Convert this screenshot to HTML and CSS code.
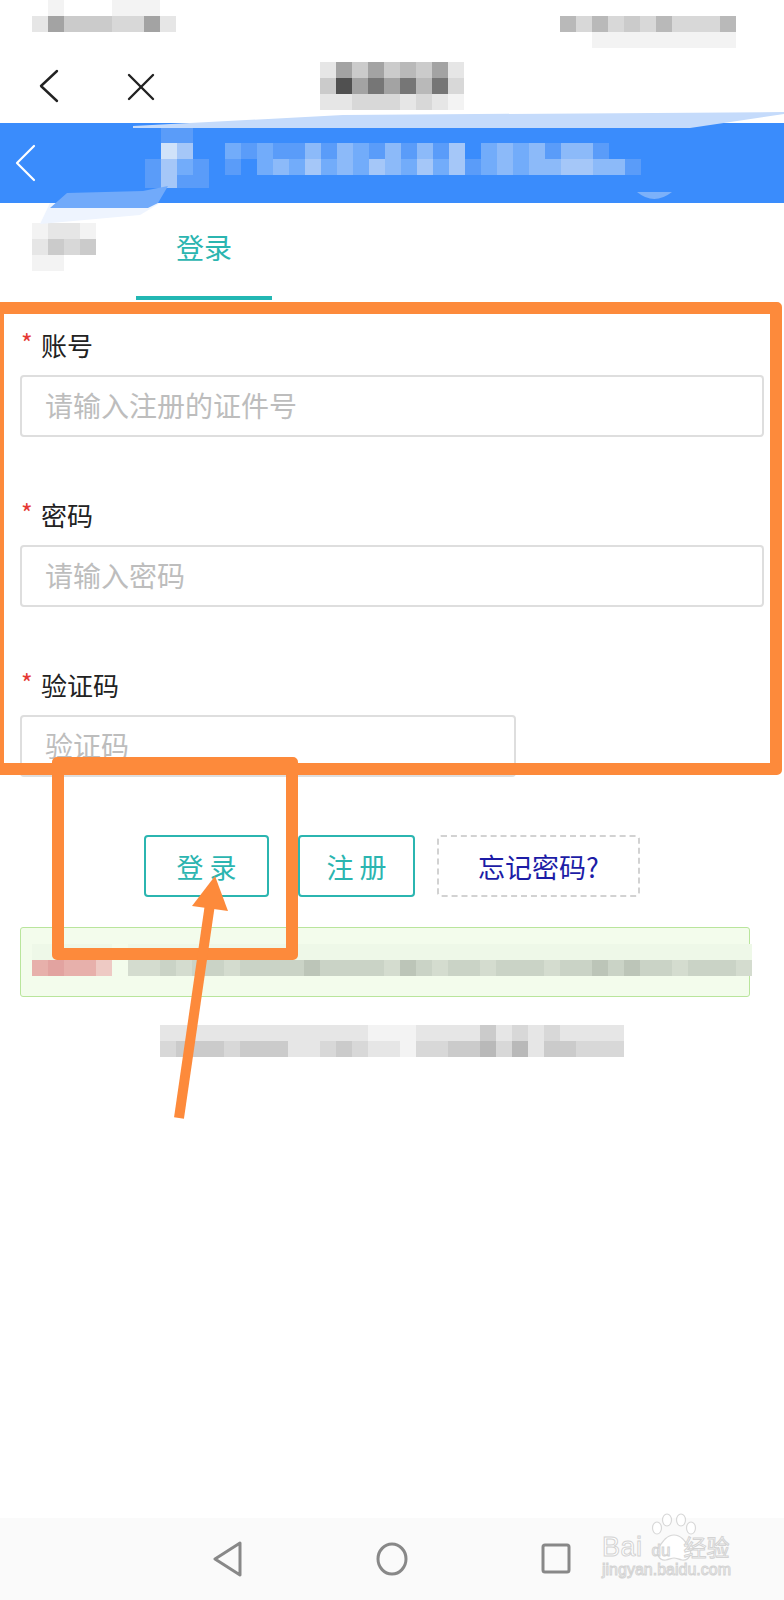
FILE: index.html
```html
<!DOCTYPE html>
<html lang="zh-CN">
<head>
    <meta charset="UTF-8">
    <meta name="viewport" content="width=device-width, initial-scale=1.0">
    <title>登录</title>
    <link rel="stylesheet" href="styles.css">
</head>
<body>
    <div class="phone">
        <!-- barra de status (borrada) -->
        <div class="status">
            <div class="mosaic">
                <div class="row"><i></i><i class="g0"></i><i></i><i></i><i></i><i class="g0"></i><i class="g0"></i><i class="g0"></i><i></i></div>
                <div class="row"><i class="g1"></i><i class="g5"></i><i class="g3"></i><i class="g3"></i><i class="g3"></i><i class="g2"></i><i class="g2"></i><i class="g5"></i><i class="g1"></i></div>
            </div>
            <div class="mosaic status-right">
                <div class="row"><i class="g4"></i><i class="g2"></i><i class="g4"></i><i class="g2"></i><i class="g3"></i><i class="g2"></i><i class="g4"></i><i class="g2"></i><i class="g2"></i><i class="g2"></i><i class="g4"></i></div>
                <div class="row"><i></i><i></i><i class="g0"></i><i class="g0"></i><i class="g0"></i><i class="g0"></i><i class="g0"></i><i class="g0"></i><i class="g0"></i><i class="g0"></i><i class="g0"></i></div>
            </div>
        </div>

        <div class="topnav">
            <svg class="nav-back" width="24" height="34" viewBox="0 0 24 34"><polyline points="20,2 4,17 20,32" /></svg>
            <svg class="nav-close" width="30" height="30" viewBox="0 0 30 30"><line x1="4" y1="4" x2="28" y2="28" /><line x1="28" y1="4" x2="4" y2="28" /></svg>
            <div class="mosaic nav-title">
                <div class="row"><i class="g1"></i><i class="g5"></i><i class="g3"></i><i class="g5"></i><i class="g3"></i><i class="g4"></i><i class="g3"></i><i class="g5"></i><i class="g1"></i></div>
                <div class="row"><i class="g3"></i><i class="g7"></i><i class="g5"></i><i class="g6"></i><i class="g5"></i><i class="g6"></i><i class="g4"></i><i class="g6"></i><i class="g2"></i></div>
                <div class="row"><i class="g1"></i><i class="g1"></i><i class="g2"></i><i class="g2"></i><i class="g2"></i><i class="g1"></i><i class="g2"></i><i class="g1"></i><i class="g0"></i></div>
            </div>
        </div>

        <div class="appbar">
            <svg class="bar-back" width="22" height="38" viewBox="0 0 22 38"><polyline points="19,2 2,19 19,36" /></svg>
            <div class="mosaic bar-title">
                <div class="row"><i></i><i class="b1"></i><i class="b1"></i></div>
                <div class="row"><i></i><i class="b5"></i><i class="b4"></i><i></i><i></i><i class="b2"></i><i class="b1"></i><i class="b2"></i><i class="b1"></i><i class="b1"></i><i class="b3"></i><i class="b1"></i><i class="b3"></i><i class="b2"></i><i class="b1"></i><i class="b3"></i><i class="b1"></i><i class="b3"></i><i class="b1"></i><i class="b4"></i><i></i><i class="b2"></i><i class="b3"></i><i class="b2"></i><i class="b3"></i><i class="b1"></i><i class="b3"></i><i class="b3"></i><i class="b1"></i><i></i><i></i></div>
                <div class="row"><i class="b1"></i><i class="b4"></i><i class="b2"></i><i class="b1"></i><i></i><i class="b1"></i><i></i><i class="b2"></i><i class="b3"></i><i class="b2"></i><i class="b4"></i><i class="b2"></i><i class="b3"></i><i class="b2"></i><i class="b4"></i><i class="b3"></i><i class="b2"></i><i class="b4"></i><i class="b2"></i><i class="b4"></i><i class="b1"></i><i class="b2"></i><i class="b3"></i><i class="b2"></i><i class="b3"></i><i class="b3"></i><i class="b4"></i><i class="b4"></i><i class="b3"></i><i class="b3"></i><i class="b1"></i></div>
                <div class="row short"><i class="b1"></i><i class="b4"></i><i class="b1"></i><i class="b1"></i></div>
            </div>
        </div>

        <div class="tabs">
            <div class="tab">
                <div class="mosaic tab-blur">
                    <div class="row"><i class="g0"></i><i class="g1"></i><i class="g1"></i><i class="g0"></i></div>
                    <div class="row"><i class="g1"></i><i class="g3"></i><i class="g2"></i><i class="g3"></i></div>
                    <div class="row"><i class="g0"></i><i class="g0"></i><i></i><i></i></div>
                </div>
            </div>
            <div class="tab active">登录</div>
        </div>

        <form class="login-form">
            <div class="form-item">
                <label for="account"><span class="req">*</span>账号</label>
                <input type="text" id="account" placeholder="请输入注册的证件号">
            </div>
            <div class="form-item">
                <label for="password"><span class="req">*</span>密码</label>
                <input type="password" id="password" placeholder="请输入密码">
            </div>
            <div class="form-item">
                <label for="code"><span class="req">*</span>验证码</label>
                <input type="text" id="code" class="code-input" placeholder="验证码">
            </div>

            <div class="actions">
                <button type="button" class="btn btn-login">登 录</button>
                <button type="button" class="btn btn-register">注 册</button>
                <button type="button" class="btn btn-forget">忘记密码?</button>
            </div>
        </form>

        <div class="notice">
            <div class="mosaic">
                <div class="row"><i class="n0"></i><i class="n0"></i><i class="n0"></i><i class="n0"></i><i class="n0"></i><i></i><i class="n0"></i><i class="n0"></i><i class="n0"></i><i class="n0"></i><i class="n0"></i><i class="n0"></i><i class="n0"></i><i class="n0"></i><i class="n0"></i><i class="n0"></i><i class="n0"></i><i class="n0"></i><i class="n0"></i><i class="n0"></i><i class="n0"></i><i class="n0"></i><i class="n0"></i><i class="n0"></i><i class="n0"></i><i class="n0"></i><i class="n0"></i><i class="n0"></i><i class="n0"></i><i class="n0"></i><i class="n0"></i><i class="n0"></i><i class="n0"></i><i class="n0"></i><i class="n0"></i><i class="n0"></i><i class="n0"></i><i class="n0"></i><i class="n0"></i><i class="n0"></i><i class="n0"></i><i class="n0"></i><i class="n0"></i><i class="n0"></i><i class="n0"></i></div>
                <div class="row"><i class="r1"></i><i class="r2"></i><i class="r1"></i><i class="r1"></i><i class="r0"></i><i></i><i class="n1"></i><i class="n1"></i><i class="n2"></i><i class="n1"></i><i class="n2"></i><i class="n2"></i><i class="n1"></i><i class="n2"></i><i class="n2"></i><i class="n2"></i><i class="n2"></i><i class="n3"></i><i class="n2"></i><i class="n2"></i><i class="n2"></i><i class="n2"></i><i class="n1"></i><i class="n3"></i><i class="n2"></i><i class="n1"></i><i class="n2"></i><i class="n2"></i><i class="n1"></i><i class="n2"></i><i class="n2"></i><i class="n2"></i><i class="n1"></i><i class="n2"></i><i class="n2"></i><i class="n3"></i><i class="n2"></i><i class="n3"></i><i class="n2"></i><i class="n2"></i><i class="n1"></i><i class="n2"></i><i class="n2"></i><i class="n2"></i><i class="n1"></i></div>
            </div>
        </div>

        <div class="mosaic footer-text">
            <div class="row"><i class="g1"></i><i class="g1"></i><i class="g1"></i><i class="g1"></i><i class="g1"></i><i class="g1"></i><i class="g1"></i><i class="g1"></i><i class="g1"></i><i class="g1"></i><i class="g1"></i><i class="g1"></i><i class="g1"></i><i class="g0"></i><i class="g0"></i><i class="g0"></i><i class="g1"></i><i class="g1"></i><i class="g1"></i><i class="g1"></i><i class="g3"></i><i class="g1"></i><i class="g2"></i><i class="g1"></i><i class="g2"></i><i class="g1"></i><i class="g1"></i><i class="g1"></i><i class="g1"></i></div>
            <div class="row"><i class="g2"></i><i class="g3"></i><i class="g3"></i><i class="g3"></i><i class="g2"></i><i class="g3"></i><i class="g3"></i><i class="g3"></i><i class="g1"></i><i class="g1"></i><i class="g2"></i><i class="g3"></i><i class="g2"></i><i class="g1"></i><i class="g1"></i><i class="g0"></i><i class="g2"></i><i class="g2"></i><i class="g3"></i><i class="g3"></i><i class="g4"></i><i class="g2"></i><i class="g4"></i><i class="g1"></i><i class="g3"></i><i class="g3"></i><i class="g2"></i><i class="g2"></i><i class="g2"></i></div>
        </div>

        <div class="navbar">
            <svg width="32" height="36" viewBox="0 0 32 36"><polygon points="28,2 3,18 28,34" /></svg>
            <svg width="32" height="36" viewBox="0 0 32 36"><ellipse cx="16" cy="18" rx="14" ry="15" /></svg>
            <svg width="32" height="36" viewBox="0 0 32 36"><rect x="3" y="4" width="26" height="27" rx="2" /></svg>
        </div>

        <!-- marca d'água -->
        <div class="watermark">
            <svg class="paw" width="46" height="50" viewBox="0 0 46 50">
                <ellipse cx="6" cy="15" rx="4.5" ry="6" />
                <ellipse cx="16" cy="7" rx="4.5" ry="6" />
                <ellipse cx="30" cy="7" rx="4.5" ry="6" />
                <ellipse cx="40" cy="15" rx="4.5" ry="6" />
                <path d="M23 22 C30 22 34 28 38 34 C42 40 38 48 31 47 C27 46 25 45 23 45 C21 45 19 46 15 47 C8 48 4 40 8 34 C12 28 16 22 23 22 Z" />
            </svg>
            <div class="wm-line"><span class="wm-bai">Bai</span><span class="wm-du">du</span><span class="wm-cn">经验</span></div>
            <div class="wm-url">jingyan.baidu.com</div>
        </div>

        <!-- borrões sobre o cabeçalho -->
        <svg class="smear" width="784" height="130" viewBox="0 0 784 130">
            <polygon class="smear-top" points="133,26 343,15 784,12 784,14 690,28 133,28" />
            <polygon class="smear-under" points="50,103 160,103 140,115 40,124" />
            <polygon class="smear-bar" points="50,108 67,93 143,91 168,86 158,103 148,108" />
            <path class="smear-bump" d="M637 92 Q654 106 672 92 Z" />
        </svg>

        <!-- anotações -->
        <div class="mark mark-form"></div>
        <div class="mark mark-button"></div>
        <svg class="arrow" width="70" height="255" viewBox="0 0 70 255">
            <line x1="40" y1="34" x2="9" y2="248" />
            <polygon points="45,6 22,36 58,41" />
        </svg>
    </div>
</body>
</html>
```

FILE: styles.css
```css
body {
    margin: 0;
    font-family: "Noto Sans CJK SC", "Noto Sans", sans-serif;
    background: #fff;
    color: #222;
}
.phone {
    position: relative;
    width: 784px;
    height: 1600px;
    display: flex;
    flex-direction: column;
    overflow: hidden;
}

/* mosaico */
.mosaic {
    display: flex;
    flex-direction: column;
}
.mosaic .row {
    display: flex;
}
.mosaic i {
    width: 16px;
    height: 16px;
    flex: none;
}
.g0 { background: #f3f3f3; }
.g1 { background: #e6e6e6; }
.g2 { background: #d8d8d8; }
.g3 { background: #cbcbcb; }
.g4 { background: #b9b9b9; }
.g5 { background: #a3a3a3; }
.g6 { background: #767676; }
.g7 { background: #505050; }
.b1 { background: #5a9cf9; }
.b2 { background: #72acfa; }
.b3 { background: #8cbaf9; }
.b4 { background: #a5c7f8; }
.b5 { background: #d0e2f9; }
.n0 { background: #eef8e8; }
.n1 { background: #d4dccf; }
.n2 { background: #cad3c6; }
.n3 { background: #bcc5b8; }
.r0 { background: #eecac4; }
.r1 { background: #e7b0ab; }
.r2 { background: #e2a3a0; }

/* topo */
.status {
    height: 48px;
    display: flex;
    justify-content: space-between;
    padding: 0 48px 0 32px;
}
.status-right {
    margin-top: 16px;
}
.topnav {
    height: 75px;
    display: flex;
    align-items: center;
}
.topnav svg {
    fill: none;
    stroke: #222;
    stroke-width: 2.4;
    stroke-linecap: round;
    stroke-linejoin: round;
}
.nav-back {
    margin-left: 37px;
}
.nav-close {
    margin-left: 64px;
}
.nav-title {
    margin-left: 165px;
}
.appbar {
    height: 80px;
    background: #3a8cfc;
    display: flex;
    align-items: center;
}
.bar-back {
    margin-left: 15px;
    fill: none;
    stroke: #fff;
    stroke-width: 2.2;
    stroke-linecap: round;
    stroke-linejoin: round;
}
.bar-title {
    align-self: flex-start;
    margin-top: 4px;
    margin-left: 108px;
}
.bar-title .short i {
    height: 13px;
}

/* abas */
.tabs {
    height: 97px;
    display: flex;
}
.tab {
    width: 136px;
    box-sizing: border-box;
}
.tab-blur {
    margin: 20px 0 0 32px;
}
.tab.active {
    display: flex;
    align-items: center;
    justify-content: center;
    padding-bottom: 6px;
    font-size: 28px;
    color: #2bb5b0;
    border-bottom: 4px solid #22b7b3;
}

/* formulário */
.login-form {
    padding: 25px 20px 0;
}
.form-item {
    margin-bottom: 58px;
}
.form-item label {
    display: block;
    line-height: 40px;
    font-size: 26px;
    color: #222;
    margin-bottom: 10px;
}
.req {
    display: inline-block;
    width: 14px;
    margin: 0 6px 0 1px;
    font-size: 25px;
    color: #e53935;
    vertical-align: 3px;
    line-height: 1;
}
.form-item input {
    display: block;
    width: 100%;
    height: 62px;
    box-sizing: border-box;
    padding: 0 23px 2px;
    border: 2px solid #dedede;
    border-radius: 4px;
    font-family: inherit;
    font-size: 28px;
    color: #333;
    outline: none;
}
.form-item input::placeholder {
    color: #bdbdbd;
}
.form-item .code-input {
    width: 496px;
}
.actions {
    display: flex;
    justify-content: center;
    margin-left: -20px;
    margin-right: -20px;
}
.btn {
    height: 62px;
    box-sizing: border-box;
    background: #fff;
    border: 2px solid #2bb5b0;
    border-radius: 4px;
    font-family: inherit;
    font-size: 27px;
    color: #2bb5b0;
    padding: 0;
    cursor: pointer;
}
.btn-login {
    width: 125px;
}
.btn-register {
    width: 117px;
    margin-left: 29px;
}
.btn-forget {
    width: 203px;
    margin-left: 22px;
    border: 2px dashed #d2d2d2;
    color: #1c1ca6;
}

/* aviso */
.notice {
    margin: 30px 34px 0 20px;
    height: 70px;
    box-sizing: border-box;
    padding: 16px 0 0 11px;
    background: #f3fcec;
    border: 1px solid #b9e59c;
    border-radius: 3px;
}
.footer-text {
    margin: 28px 0 0 160px;
}

/* barra de navegação */
.navbar {
    margin-top: auto;
    height: 82px;
    background: #fafafa;
    display: flex;
    justify-content: center;
    align-items: center;
    gap: 132px;
}
.navbar svg {
    fill: none;
    stroke: #888;
    stroke-width: 3;
    stroke-linejoin: round;
}

.watermark {
    position: absolute;
    left: 602px;
    top: 1513px;
    width: 140px;
    font-family: "Liberation Sans", sans-serif;
    color: #fff;
    -webkit-text-stroke: 1px #d3d3d3;
}
.paw {
    position: absolute;
    left: 49px;
    top: 0;
    fill: #fff;
    stroke: #d8d8d8;
    stroke-width: 1.2;
}
.wm-line {
    position: relative;
    display: flex;
    align-items: baseline;
    margin-top: 18px;
    height: 30px;
    line-height: 30px;
}
.wm-bai {
    font-size: 27px;
    letter-spacing: 0.5px;
}
.wm-du {
    font-size: 17px;
    margin-left: 9px;
    width: 30px;
}
.wm-cn {
    font-family: "Noto Sans CJK SC", sans-serif;
    font-size: 23px;
    margin-left: 2px;
}
.wm-url {
    font-size: 16px;
    line-height: 16px;
    margin-top: 1px;
}

/* sobreposições */
.smear {
    position: absolute;
    left: 0;
    top: 100px;
}
.smear-top { fill: #c5dbfb; }
.smear-under { fill: #eef4fe; }
.smear-bar { fill: #71aafa; }
.smear-bump { fill: #7cb1fa; }

.mark {
    position: absolute;
    border: 12px solid #fd8a3b;
    border-radius: 5px;
    box-sizing: border-box;
}
.mark-form {
    left: -8px;
    top: 302px;
    width: 790px;
    height: 473px;
}
.mark-button {
    left: 52px;
    top: 757px;
    width: 246px;
    height: 203px;
}
.arrow {
    position: absolute;
    left: 170px;
    top: 870px;
}
.arrow line {
    stroke: #fd8a3b;
    stroke-width: 10;
}
.arrow polygon {
    fill: #fd8a3b;
}
```
